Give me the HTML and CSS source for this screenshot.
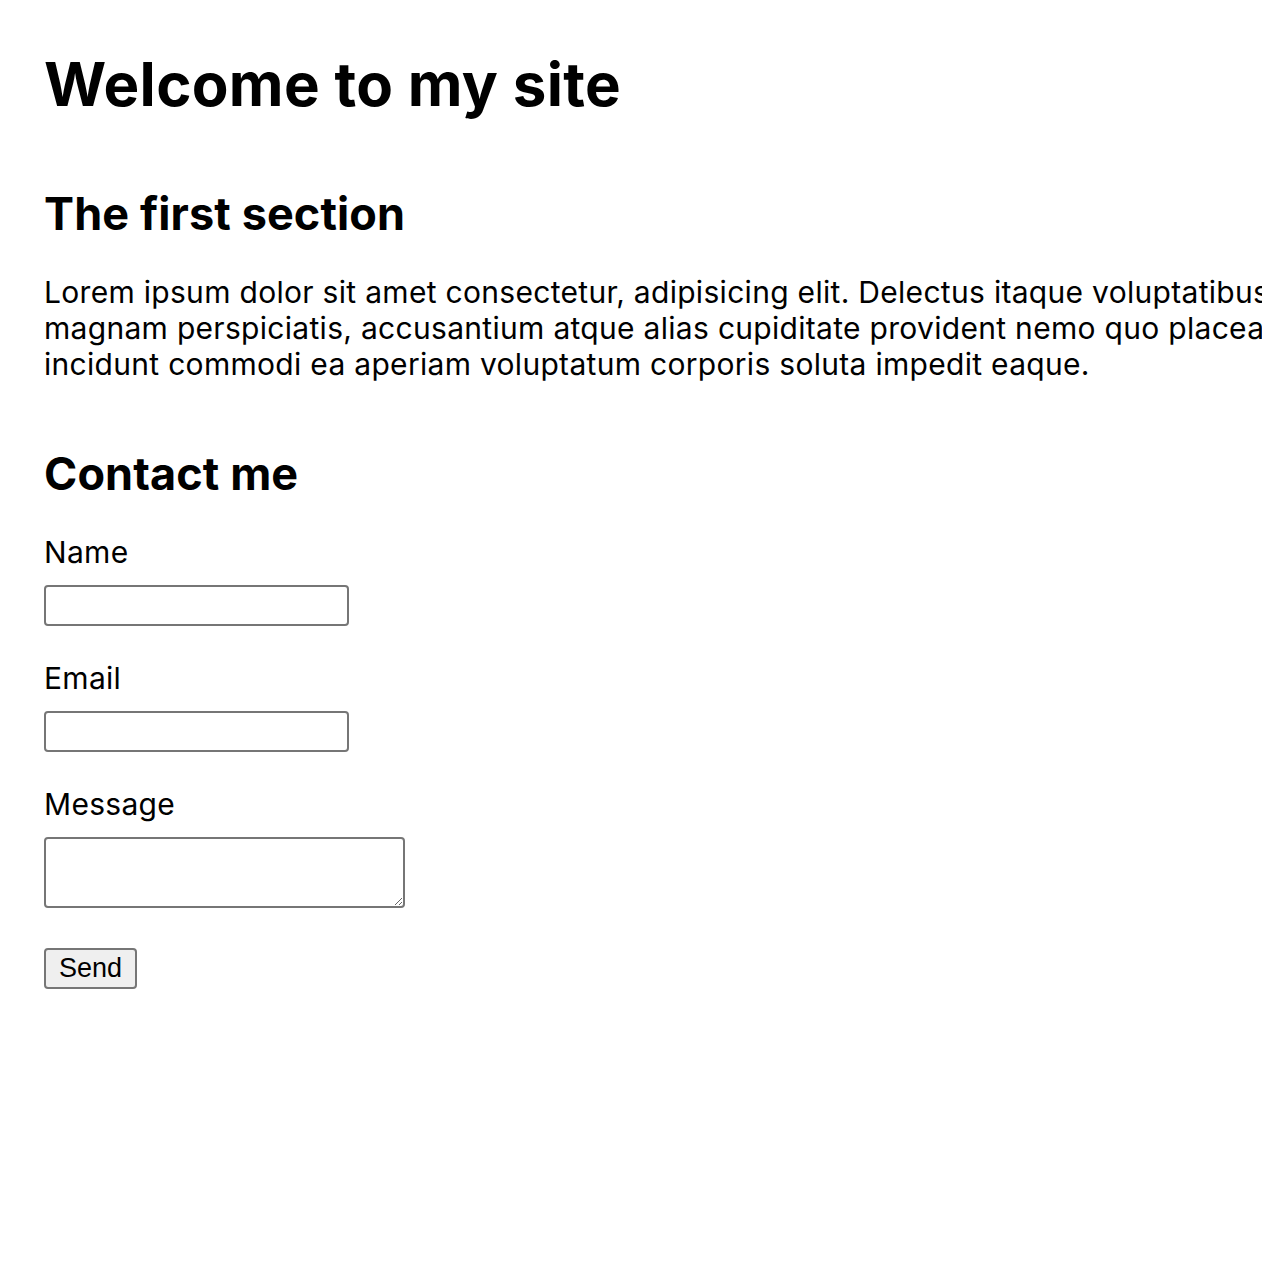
FILE: index.html
```html
<!DOCTYPE html>
<html lang="en">
<head>
<meta charset="utf-8">
<title>Welcome to my site</title>
<link rel="stylesheet" href="styles.css">
</head>
<body>
<main class="page">
  <h1 class="title">Welcome to my site</h1>
  <section class="section">
    <h2 class="heading">The first section</h2>
    <p class="text">Lorem ipsum dolor sit amet consectetur, adipisicing elit. Delectus itaque voluptatibus magnam perspiciatis, accusantium atque alias cupiditate provident nemo quo placeat incidunt commodi ea aperiam voluptatum corporis soluta impedit eaque.</p>
  </section>
  <section class="section section-contact">
    <h2 class="heading">Contact me</h2>
    <form class="form">
      <div class="field">
        <label class="label" for="name">Name</label>
        <input class="input" id="name" type="text">
      </div>
      <div class="field">
        <label class="label" for="email">Email</label>
        <input class="input" id="email" type="email">
      </div>
      <div class="field field-last">
        <label class="label" for="message">Message</label>
        <textarea class="textarea" id="message"></textarea>
      </div>
      <button class="button" type="submit">Send</button>
    </form>
  </section>
</main>
</body>
</html>
```
FILE: styles.css
```css
html, body {
  margin: 0;
  padding: 0;
  overflow: hidden;
  background: #fff;
}
body {
  font-family: Inter, "Noto Sans", sans-serif;
  color: #000;
  font-size: 30px;
  line-height: 36px;
  letter-spacing: 0.3px;
}
.page {
  padding: 48px 44px 0 44px;
  width: 1290px;
}
.title {
  margin: 0;
  font-size: 60px;
  line-height: 72px;
  font-weight: 700;
  letter-spacing: 0.3px;
}
.section {
  margin-top: 67px;
}
.section-contact {
  margin-top: 65px;
}
.heading {
  margin: 0;
  font-size: 45px;
  line-height: 54px;
  font-weight: 700;
  letter-spacing: 0.1px;
}
.text {
  margin: 33px 0 0 0;
}
.form {
  margin-top: 33px;
  display: flex;
  flex-direction: column;
  align-items: flex-start;
}
.field {
  display: flex;
  flex-direction: column;
  align-items: flex-start;
  gap: 15px;
  margin-bottom: 34px;
}
.field-last {
  margin-bottom: 40px;
}
.label {
  display: block;
}
.input, .textarea {
  box-sizing: border-box;
  border: 2px solid #767676;
  border-radius: 4px;
  background: #fff;
  margin: 0;
  padding: 2px 4px;
  font-size: 20px;
}
.input {
  width: 305px;
  height: 41px;
}
.textarea {
  width: 361px;
  height: 71px;
}
.button {
  box-sizing: border-box;
  width: 93px;
  height: 41px;
  margin: 0;
  padding: 0;
  border: 2px solid #767676;
  border-radius: 4px;
  background: #efefef;
  font-family: "Liberation Sans", Arial, sans-serif;
  font-size: 27px;
  letter-spacing: 0;
  color: #000;
}
```
